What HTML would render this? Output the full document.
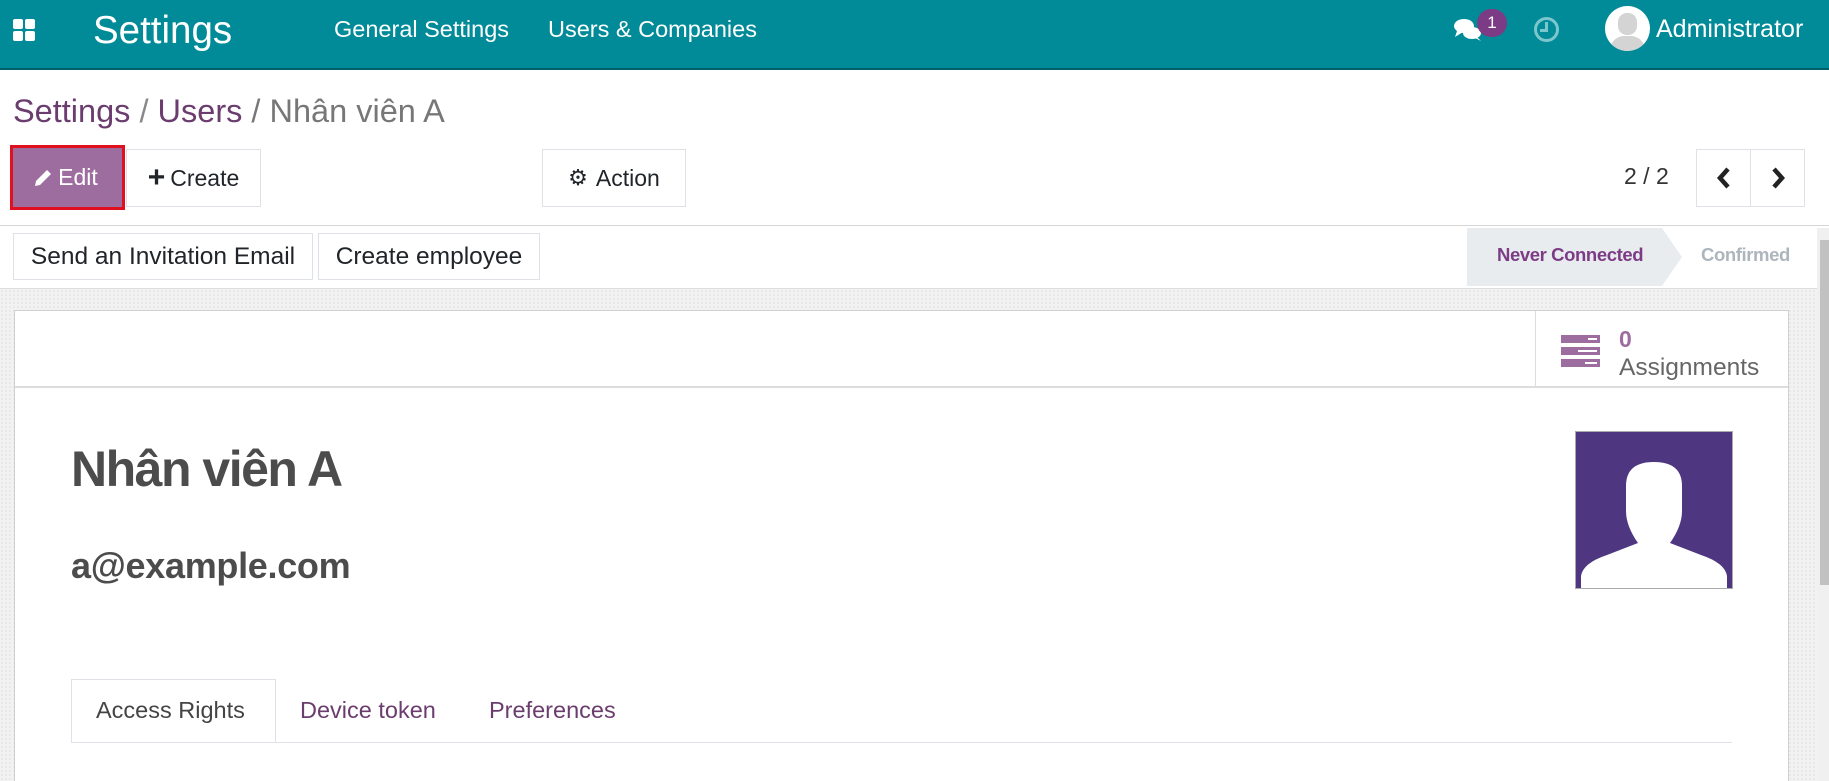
<!DOCTYPE html>
<html><head><meta charset="utf-8"><style>
*{box-sizing:border-box;margin:0;padding:0}
html{width:1829px;height:781px;overflow:hidden}
body{width:1829px;height:781px;overflow:hidden;font-family:"Liberation Sans",Arial,sans-serif;background:#fff;position:relative;color:#212529}
.abs{position:absolute}
.nav{left:0;top:0;width:1829px;height:70px;background:#018a98;border-bottom:2px solid #01606a}
.nav .t{color:#fff;position:absolute;white-space:nowrap}
.btn{position:absolute;border:1px solid #dee2e6;background:#fff;font-size:23px;color:#212529;display:flex;align-items:center;justify-content:center;white-space:nowrap}
.dots{background-color:#f2f2f2;background-image:radial-gradient(#e4e4e4 1px,transparent 1px);background-size:4px 4px}
</style></head><body>
<div class="abs nav">
  <svg class="abs" style="left:13px;top:19px" width="22" height="22" viewBox="0 0 22 22" fill="#fff"><rect x="0" y="0" width="10" height="10" rx="2"/><rect x="12" y="0" width="10" height="10" rx="2"/><rect x="0" y="12" width="10" height="10" rx="2"/><rect x="12" y="12" width="10" height="10" rx="2"/></svg>
  <div class="t" style="left:93px;top:9px;font-size:38.5px">Settings</div>
  <div class="t" style="left:334px;top:16px;font-size:23.5px">General Settings</div>
  <div class="t" style="left:548px;top:16px;font-size:23.5px">Users &amp; Companies</div>
  <svg class="abs" style="left:1453px;top:16px" width="32" height="26" viewBox="0 0 32 26" fill="#fff"><ellipse cx="11" cy="10" rx="10" ry="7"/><path d="M4 15 L2 21 L10 16Z"/><ellipse cx="19" cy="17" rx="9" ry="6"/><path d="M24 21 L28 25 L22 22Z"/></svg>
  <div class="abs" style="left:1477px;top:9px;width:30px;height:28px;border-radius:14px;background:#7c3c85;color:#fff;font-size:17px;text-align:center;line-height:28px">1</div>
  <div class="abs" style="left:1534px;top:17px;width:25px;height:25px;border-radius:50%;border:3px solid #7cc6ce"></div>
  <div class="abs" style="left:1545px;top:22px;width:3px;height:9px;background:#7cc6ce"></div>
  <div class="abs" style="left:1540px;top:29px;width:8px;height:3px;background:#7cc6ce"></div>
  <div class="abs" style="left:1605px;top:6px;width:45px;height:45px;border-radius:50%;background:#fff;overflow:hidden"><div class="abs" style="left:13px;top:7px;width:19px;height:22px;border-radius:9px;background:#d4d4d4"></div><div class="abs" style="left:5px;top:30px;width:35px;height:25px;border-radius:14px 14px 0 0;background:#d4d4d4"></div></div>
  <div class="t" style="left:1656px;top:15px;font-size:25px">Administrator</div>
</div>
<div class="abs" style="left:13px;top:93px;font-size:32.5px;white-space:nowrap"><span style="color:#6b3d6e">Settings</span><span style="color:#888"> / </span><span style="color:#6b3d6e">Users</span><span style="color:#777"> / Nhân viên A</span></div>
<div class="abs" style="left:10px;top:145px;width:115px;height:65px;border:3px solid #e0101e;background:#9e6d9f"></div>
<div class="abs" style="left:12px;top:148px;width:108px;height:59px;color:#fff;font-size:23px;display:flex;align-items:center;justify-content:center;gap:6px"><svg width="18" height="18" viewBox="0 0 18 18" fill="#fff"><path d="M13 1 L17 5 L6 16 L1 17 L2 12Z"/></svg>Edit</div>
<div class="btn" style="left:126px;top:149px;width:135px;height:58px"><b style="font-size:30px;margin-right:5px;line-height:1">+</b>Create</div>
<div class="btn" style="left:542px;top:149px;width:144px;height:58px"><span style="font-size:22px;margin-right:8px">⚙</span>Action</div>
<div class="abs" style="left:1624px;top:163px;font-size:23px;color:#333">2 / 2</div>
<div class="btn" style="left:1696px;top:149px;width:55px;height:58px"><svg width="16" height="22" viewBox="0 0 16 22"><path d="M12 2 L4 11 L12 20" fill="none" stroke="#222" stroke-width="4.5"/></svg></div>
<div class="btn" style="left:1750px;top:149px;width:55px;height:58px"><svg width="16" height="22" viewBox="0 0 16 22"><path d="M4 2 L12 11 L4 20" fill="none" stroke="#222" stroke-width="4.5"/></svg></div>
<div class="abs" style="left:0;top:225px;width:1829px;height:1px;background:#d6d6d6"></div>
<div class="btn" style="left:13px;top:233px;width:300px;height:47px;font-size:24.5px">Send an Invitation Email</div>
<div class="btn" style="left:318px;top:233px;width:222px;height:47px;font-size:24.5px">Create employee</div>
<svg class="abs" style="left:1467px;top:228px" width="215" height="58"><polygon points="0,0 195,0 215,29 195,58 0,58" fill="#e9ecef"/></svg>
<div class="abs" style="left:1497px;top:244px;font-size:18.5px;font-weight:bold;color:#7c3c85;letter-spacing:-0.4px">Never Connected</div>
<div class="abs" style="left:1701px;top:244px;font-size:18.5px;font-weight:bold;color:#adb5bd;letter-spacing:-0.4px">Confirmed</div>
<div class="abs dots" style="left:0;top:288px;width:1817px;height:493px;border-top:1px solid #ddd"></div>
<div class="abs" style="left:1817px;top:228px;width:12px;height:553px;background:#f0f0f0"></div>
<div class="abs" style="left:1820px;top:240px;width:9px;height:345px;background:#c1c1c1"></div>
<div class="abs" style="left:14px;top:310px;width:1775px;height:471px;background:#fff;border:1px solid #d0d0d0;border-bottom:none"></div>
<div class="abs" style="left:15px;top:386px;width:1773px;height:2px;background:#dcdcdc"></div>
<div class="abs" style="left:1535px;top:311px;width:1px;height:76px;background:#ddd"></div>
<svg class="abs" style="left:1561px;top:335px" width="40" height="32" viewBox="0 0 40 32"><g fill="#9e6d9f"><rect x="0" y="0" width="39" height="8"/><rect x="0" y="12" width="39" height="8"/><rect x="0" y="24" width="39" height="8"/></g><g fill="#fff"><rect x="27" y="3" width="9" height="2"/><rect x="17" y="15" width="19" height="2"/><rect x="24" y="27" width="12" height="2"/></g></svg>
<div class="abs" style="left:1619px;top:326px;font-size:23px;font-weight:bold;color:#9e6d9f">0</div>
<div class="abs" style="left:1619px;top:354px;font-size:24.5px;color:#666">Assignments</div>
<div class="abs" style="left:71px;top:440px;font-size:50px;font-weight:bold;color:#4c4c4c;letter-spacing:-1.5px">Nhân viên A</div>
<div class="abs" style="left:71px;top:545px;font-size:36px;font-weight:bold;color:#4c4c4c;letter-spacing:-0.3px">a@example.com</div>
<svg class="abs" style="left:1575px;top:431px" width="158" height="158" viewBox="0 0 158 158"><rect x="0.5" y="0.5" width="157" height="157" fill="#4e3780" stroke="#aaa"/><path d="M51 55 Q51 31 79 31 Q107 31 107 55 L107 80 Q107 95 95 112 L126 124 Q150 132 152 145 L152 157 L6 157 L6 145 Q8 132 32 124 L63 112 Q51 95 51 80Z" fill="#fff"/></svg>
<div class="abs" style="left:71px;top:679px;width:205px;height:64px;border:1px solid #dee2e6;border-bottom:none;background:#fff"></div>
<div class="abs" style="left:71px;top:742px;width:1661px;height:1px;background:#dee2e6"></div>
<div class="abs" style="left:71px;top:743px;width:205px;height:1px;background:#fff"></div>
<div class="abs" style="left:96px;top:697px;font-size:23.5px;color:#444">Access Rights</div>
<div class="abs" style="left:300px;top:697px;font-size:23.5px;color:#6b3d6e">Device token</div>
<div class="abs" style="left:489px;top:697px;font-size:23.5px;color:#6b3d6e">Preferences</div>
</body></html>
